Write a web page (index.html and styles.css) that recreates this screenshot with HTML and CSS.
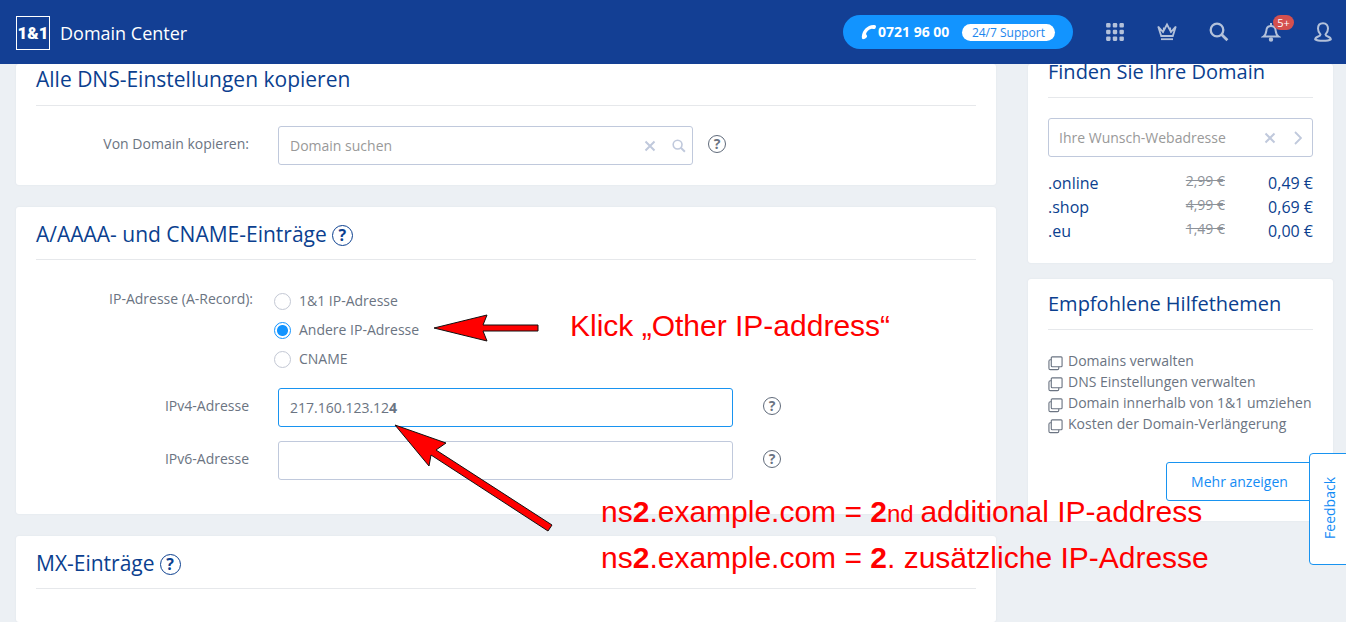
FILE: index.html
```html
<!DOCTYPE html>
<html lang="de">
<head>
<meta charset="utf-8">
<meta name="viewport" content="width=device-width, initial-scale=1">
<title>Domain Center</title>
<link rel="stylesheet" href="styles.css">
</head>
<body>
<svg class="sprite" aria-hidden="true">
  <symbol id="i-close" viewBox="0 0 12 12"><path d="M1.5 1.5l9 9M10.5 1.5l-9 9" fill="none" stroke="currentColor" stroke-width="2"/></symbol>
  <symbol id="i-search" viewBox="0 0 20 20"><circle cx="8" cy="8" r="6.3" fill="none" stroke="currentColor" stroke-width="2.3"/><path d="M12.6 12.6l5.8 5.6" fill="none" stroke="currentColor" stroke-width="2.8"/></symbol>
  <symbol id="i-copy" viewBox="0 0 16 16"><rect x="3.5" y="1.5" width="11.500" height="10.500" rx="1" fill="none" stroke="currentColor" stroke-width="1.200"/><path d="M3.5 4.500H2.500Q1 4.500 1 6V13.500Q1 15 2.500 15H10Q11.500 15 11.500 13.500V12" fill="none" stroke="currentColor" stroke-width="1.200"/></symbol>
</svg>

<header class="topbar">
  <a class="brand" href="#"><span class="logo">1&amp;1</span><span class="product">Domain Center</span></a>
  <a class="phone" href="#">
    <svg class="handset" viewBox="0 0 16 16"><path d="M2 15.200Q.6 15 .8 12.500C1.500 6 6 1.500 12.500 1q2.300-.2 2.500 1.300l-.3 1.500q-.4 1.500-2 1.300l-2-.3C7.500 5.500 5.700 7.500 5 10l1 1.800q.3 1-.5 1.800-1.300 1.500-3.500 1.600z" fill="currentColor"/></svg>
    <strong>0721 96 00</strong>
    <span class="support">24/7 Support</span>
  </a>
  <nav class="tools">
    <button class="tool" aria-label="Apps"><svg viewBox="0 0 18 18" fill="currentColor"><rect x="1" y="1" width="4" height="4" rx="1"/><rect x="7" y="1" width="4" height="4" rx="1"/><rect x="13" y="1" width="4" height="4" rx="1"/><rect x="1" y="7" width="4" height="4" rx="1"/><rect x="7" y="7" width="4" height="4" rx="1"/><rect x="13" y="7" width="4" height="4" rx="1"/><rect x="1" y="13" width="4" height="4" rx="1"/><rect x="7" y="13" width="4" height="4" rx="1"/><rect x="13" y="13" width="4" height="4" rx="1"/></svg></button>
    <button class="tool" aria-label="Premium"><svg viewBox="0 0 20 20" fill="none" stroke="currentColor" stroke-width="1.800"><path d="M4.200 14L1.200 4.500 6 10 10 2.500 14 10l4.800-5.500L15.800 14z"/><path d="M6.200 10.500L6.600 5.500M13.800 10.500L13.400 5.500" stroke-width="1.200"/><path d="M4 17.200h12"/></svg></button>
    <button class="tool" aria-label="Suche"><svg viewBox="0 0 20 20"><use href="#i-search"/></svg></button>
    <button class="tool" aria-label="Benachrichtigungen"><svg viewBox="0 0 18 20" fill="none" stroke="currentColor" stroke-width="2"><path d="M1.500 14.500H16.500C13.500 12.500 14 9 13.200 6.500 12.500 4.500 11 4 9 4S5.500 4.500 4.800 6.500C4 9 4.500 12.500 1.500 14.500z"/><path d="M9 4V1"/><circle cx="9" cy="17.500" r="1.200" fill="currentColor"/></svg><span class="badge">5+</span></button>
    <button class="tool" aria-label="Konto"><svg viewBox="0 0 18 20" fill="none" stroke="currentColor" stroke-width="2"><path d="M9 1.200C5.500 1.200 4 3.700 4 6.500c0 3 .8 4.500 2.500 6C6.500 15 1.500 14 1.200 17.300 4 19.200 14 19.200 16.800 17.300 16.500 14 11.500 15 11.500 12.500 13.200 11 14 9.500 14 6.500 14 3.700 12.500 1.200 9 1.200z"/></svg></button>
  </nav>
</header>

<main class="page">
  <div class="column">
    <section class="card card-copy">
      <h2>Alle DNS-Einstellungen kopieren</h2>
      <div class="row">
        <label class="label" for="copy">Von Domain kopieren:</label>
        <div class="field field-search">
          <input id="copy" type="text" placeholder="Domain suchen">
          <button class="mini" aria-label="Leeren"><svg class="x"><use href="#i-close"/></svg></button>
          <button class="mini" aria-label="Suchen"><svg class="lens"><use href="#i-search"/></svg></button>
        </div>
        <button class="help help-near">?</button>
      </div>
    </section>

    <section class="card card-records">
      <h2>A/AAAA- und CNAME-Einträge <button class="help help-title">?</button></h2>
      <div class="row row-radios" role="radiogroup" aria-labelledby="arec">
        <span class="label" id="arec">IP-Adresse (A-Record):</span>
        <div class="radios">
          <label><input type="radio" name="ip"><span>1&amp;1 IP-Adresse</span></label>
          <label><input type="radio" name="ip" checked><span>Andere IP-Adresse</span></label>
          <label><input type="radio" name="ip"><span>CNAME</span></label>
        </div>
      </div>
      <div class="row">
        <label class="label" for="v4">IPv4-Adresse</label>
        <div class="field field-wide active"><input id="v4" type="text" value="217.160.123.124"></div>
        <button class="help help-far">?</button>
      </div>
      <div class="row row-next">
        <label class="label" for="v6">IPv6-Adresse</label>
        <div class="field field-wide"><input id="v6" type="text"></div>
        <button class="help help-far">?</button>
      </div>
    </section>

    <section class="card card-mx">
      <h2>MX-Einträge <button class="help help-title">?</button></h2>
    </section>
  </div>

  <aside class="side">
    <section class="card card-find">
      <h3>Finden Sie Ihre Domain</h3>
      <div class="field">
        <input type="text" placeholder="Ihre Wunsch-Webadresse" aria-label="Ihre Wunsch-Webadresse">
        <button class="mini" aria-label="Leeren"><svg class="x"><use href="#i-close"/></svg></button>
        <button class="mini" aria-label="Weiter"><svg class="chevron" viewBox="0 0 8 14"><path d="M1 1l6 6-6 6" fill="none" stroke="currentColor" stroke-width="1.800"/></svg></button>
      </div>
      <table class="prices">
        <tr><td>.online</td><td class="old"><s>2,99 €</s></td><td class="new">0,49 €</td></tr>
        <tr><td>.shop</td><td class="old"><s>4,99 €</s></td><td class="new">0,69 €</td></tr>
        <tr><td>.eu</td><td class="old"><s>1,49 €</s></td><td class="new">0,00 €</td></tr>
      </table>
    </section>
    <section class="card card-help">
      <h3>Empfohlene Hilfethemen</h3>
      <ul class="topics">
        <li><a href="#"><svg><use href="#i-copy"/></svg>Domains verwalten</a></li>
        <li><a href="#"><svg><use href="#i-copy"/></svg>DNS Einstellungen verwalten</a></li>
        <li><a href="#"><svg><use href="#i-copy"/></svg>Domain innerhalb von 1&amp;1 umziehen</a></li>
        <li><a href="#"><svg><use href="#i-copy"/></svg>Kosten der Domain-Verlängerung</a></li>
      </ul>
      <button class="more">Mehr anzeigen</button>
    </section>
  </aside>
</main>

<button class="feedback"><span>Feedback</span></button>

<div class="notes">
  <span class="patch">4</span>
  <svg class="arrow arrow-a" viewBox="0 0 108 30"><path d="M2 15L55 2 51 12H106V18H51L55 28z"/></svg>
  <svg class="arrow arrow-b" viewBox="0 0 162 110"><path d="M2 2L53 20 43 27 159 102 155 108 38 32 36 43z"/></svg>
  <p class="note note-a">Klick „Other IP-address“</p>
  <p class="note note-b">ns<b>2</b>.example.com = <b>2</b><small>nd </small>additional IP-address</p>
  <p class="note note-c">ns<b>2</b>.example.com = <b>2</b>. zusätzliche IP-Adresse</p>
</div>
</body>
</html>
```
FILE: styles.css
```css
* { box-sizing: border-box; }
body {
  margin: 0;
  height: 100vh;
  overflow: hidden;
  display: flex;
  flex-direction: column;
  background: #ecf0f4;
  color: #6b7482;
  font: 14px/20px "Open Sans", "Noto Sans", sans-serif;
}
button, input { font: inherit; color: inherit; }
button { border: 0; padding: 0; background: none; cursor: pointer; }
a { color: inherit; text-decoration: none; }
.sprite { position: absolute; width: 0; height: 0; }

.topbar {
  flex: none;
  height: 64px;
  display: flex;
  align-items: center;
  padding: 0 13px 0 16px;
  background: #133f94;
  color: #fff;
  position: relative;
  z-index: 1;
}
.brand { display: flex; align-items: center; gap: 10px; margin-right: auto; padding-top: 2px; }
.logo {
  width: 34px;
  height: 34px;
  border: 1px solid #fff;
  display: flex;
  align-items: center;
  justify-content: center;
  font: 900 17px/32px Roboto, "Open Sans", sans-serif;
}
.product { font-size: 18px; line-height: 24px; }
.phone {
  display: flex;
  align-items: center;
  width: 230px;
  height: 34px;
  padding: 0 18px;
  border-radius: 17px;
  background: #1294ff;
}
.handset { width: 16px; height: 16px; margin-right: 1px; }
.phone strong { margin-right: auto; }
.support {
  padding: 0 10px;
  border-radius: 9px;
  background: #fff;
  color: #1c86ee;
  font-size: 12px;
  line-height: 17px;
}
.tools { display: flex; gap: 32px; margin-left: 32px; }
.tool { position: relative; width: 20px; height: 20px; color: #b3c1da; }
.tool svg { display: block; width: 20px; height: 20px; }
.badge {
  position: absolute;
  left: 12px;
  top: -7px;
  width: 21px;
  border-radius: 8px;
  background: #d4504f;
  color: #fff;
  font-size: 11px;
  line-height: 15px;
}

.page {
  flex: 1;
  min-height: 0;
  display: grid;
  grid-template-columns: minmax(0, 1fr) 305px;
  gap: 32px;
  padding: 0 13px 0 16px;
}
.column { display: flex; flex-direction: column; gap: 22px; }
.side { display: flex; flex-direction: column; gap: 16px; }
.card {
  padding: 12px 20px 20px;
  border-radius: 3px;
  background: #fff;
  box-shadow: 0 0 2px #dde2e8;
}
h2, h3 {
  margin: 0;
  padding-bottom: 10px;
  border-bottom: 1px solid #e6e8eb;
  color: #0b3f8f;
  font-weight: 400;
  line-height: 30px;
}
h2 { display: flex; align-items: center; gap: 5px; font-size: 21px; }
h3 { font-size: 20px; }
.card-copy { padding-top: 0; }
.card-copy h2 { padding-bottom: 11px; }
.card-records { padding-bottom: 34px; }
.card-mx { flex: 1; }
.card-find { padding-top: 0; }
.card-find h3 { margin-top: -7px; }
.card-help { padding-top: 10px; }

.row { display: flex; align-items: center; margin-top: 20px; }
.label { width: 213px; margin-right: 29px; padding-bottom: 4px; text-align: right; }
.row-radios { align-items: flex-start; margin-top: 27px; margin-bottom: -6px; }
.row-radios .label { width: 217px; margin-right: 21px; padding-top: 2px; }
.row-next { margin-top: 14px; }
.field {
  display: flex;
  align-items: center;
  height: 39px;
  padding: 0 8px 0 11px;
  border: 1px solid #c0c9dc;
  border-radius: 3px;
  background: #fff;
}
.field input { flex: 1; min-width: 0; padding: 0; border: 0; outline: 0; background: none; }
.field input::placeholder { color: #999; opacity: 1; }
.field-search { width: 415px; }
.field-wide { width: 455px; }
.card-find .field { margin-top: 20px; padding-left: 10px; }
.active { border-color: #1893f0; }
.mini { width: 12px; height: 14px; margin-left: 16px; color: #c0c9dc; }
.mini svg { display: block; margin: 0 auto; }
.x { width: 12px; height: 12px; }
.lens { width: 14px; height: 14px; }
.chevron { width: 8px; height: 14px; }
.help {
  flex: none;
  width: 18px;
  height: 18px;
  margin-bottom: 3px;
  border: 1px solid #5f6a7a;
  border-radius: 50%;
  font-size: 14px;
  font-weight: 700;
  line-height: 16px;
}
.help-near { margin-left: 15px; }
.help-far { margin-left: 30px; }
.help-title {
  width: 21px;
  height: 21px;
  margin: 2px 0 0;
  border-color: #0b3f8f;
  font-size: 16px;
  line-height: 19px;
}

.radios label { display: flex; align-items: center; gap: 8px; height: 29px; }
.radios span { padding-bottom: 2px; }
.radios input {
  appearance: none;
  width: 17px;
  height: 17px;
  margin: 0;
  border: 1px solid #c3c8d4;
  border-radius: 50%;
}
.radios input:checked { border-color: #1294ff; background: radial-gradient(circle, #1294ff 5px, #fff 6px); }

.prices { width: 100%; margin-top: 14px; border-spacing: 0; color: #0b3f8f; font-size: 16px; line-height: 24px; }
.prices td { padding: 0; }
.prices td.old { padding-bottom: 4px; color: #8d9299; font-size: 14px; line-height: 20px; text-align: right; }
.prices td.new { width: 88px; text-align: right; }
.topics { margin: 20px 0 28px; padding: 0; list-style: none; line-height: 21px; white-space: nowrap; }
.topics a { display: flex; align-items: center; gap: 5px; }
.topics svg { width: 15px; height: 16px; margin-top: 4px; }
.more {
  display: block;
  width: 147px;
  height: 39px;
  margin-left: auto;
  border: 1px solid #1893f0;
  border-radius: 3px;
  color: #148cf5;
}
.feedback {
  position: absolute;
  right: -4px;
  top: 453px;
  width: 41px;
  height: 112px;
  padding-top: 2px;
  border: 1px solid #1893f0;
  border-radius: 4px;
  background: #fff;
  color: #148cf5;
  z-index: 2;
}
.feedback span { display: inline-block; writing-mode: vertical-rl; transform: rotate(180deg); }

.notes { position: absolute; left: 0; top: 0; z-index: 3; pointer-events: none; }
.patch { position: absolute; left: 389px; top: 398px; background: #fff; font-weight: 700; }
.arrow { position: absolute; fill: #f00; stroke: #111; stroke-width: 1; }
.arrow-a { left: 432px; top: 313px; width: 108px; height: 30px; }
.arrow-b { left: 393px; top: 423px; width: 162px; height: 110px; }
.note {
  position: absolute;
  margin: 0;
  color: #f00;
  font: 30px/34px "Liberation Sans", Arial, sans-serif;
  white-space: nowrap;
}
.note small { font-size: 24px; }
.note-a { left: 570px; top: 309px; }
.note-b { left: 601px; top: 495px; }
.note-c { left: 601px; top: 541px; }
```
